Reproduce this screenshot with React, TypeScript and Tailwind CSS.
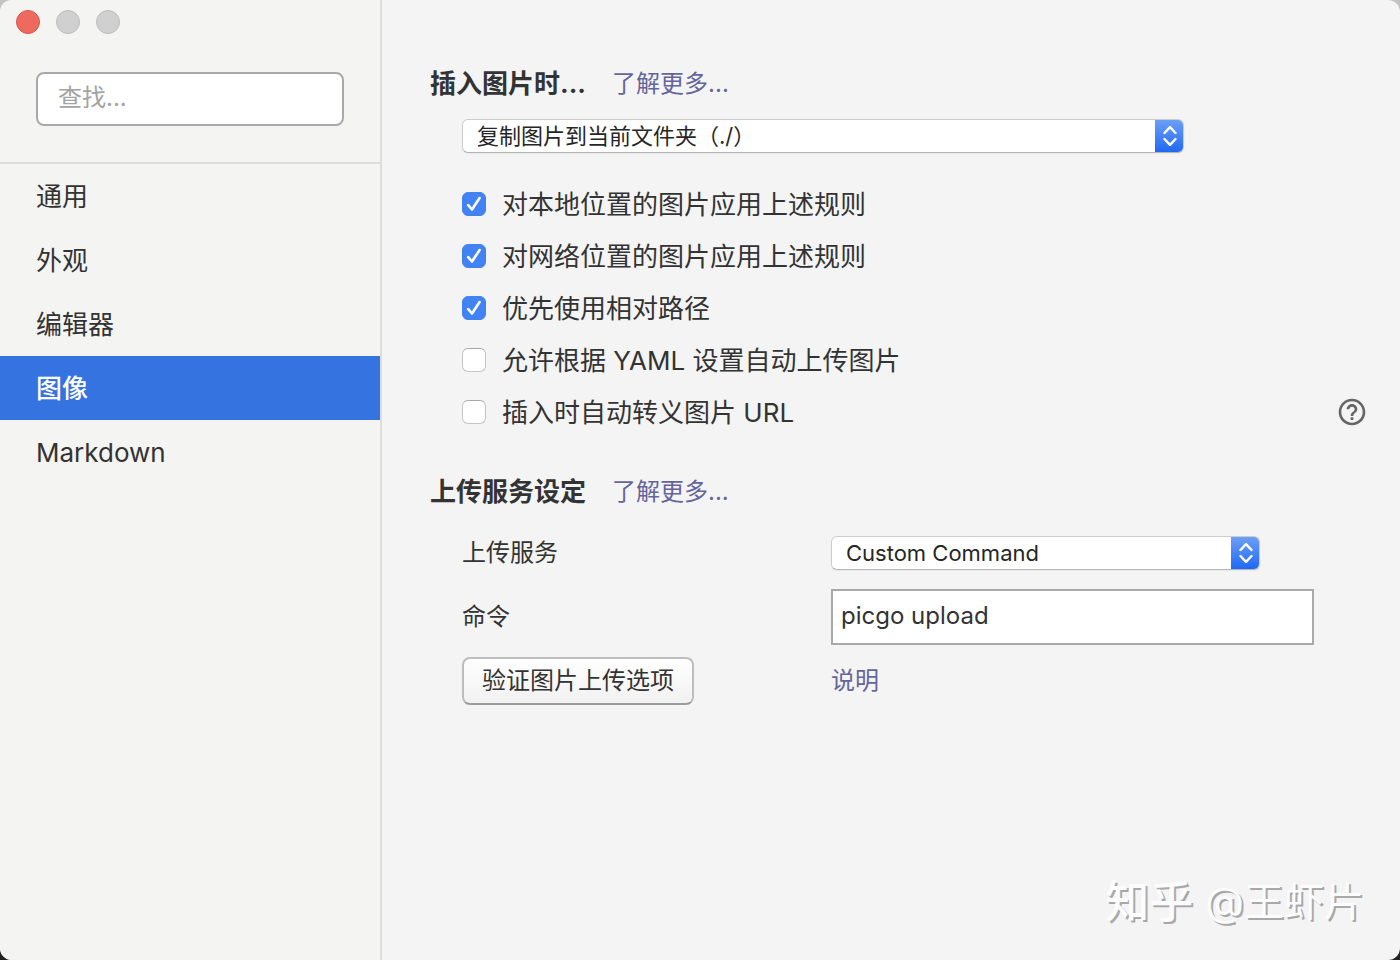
import { useState } from "react";
import type { ReactNode } from "react";
import clsx from "clsx";
import { MdHelpOutline } from "react-icons/md";

const sections = ["通用", "外观", "编辑器", "图像", "Markdown"];

const imageRules = [
  { id: "local", label: "对本地位置的图片应用上述规则", checked: true },
  { id: "network", label: "对网络位置的图片应用上述规则", checked: true },
  { id: "relative", label: "优先使用相对路径", checked: true },
  { id: "yaml", label: "允许根据 YAML 设置自动上传图片", checked: false },
  { id: "escape", label: "插入时自动转义图片 URL", checked: false, help: true },
];

type SelectProps = {
  id: string;
  label?: string;
  options: string[];
  className?: string;
};

const Select = ({ id, label, options, className }: SelectProps) => (
  <div
    className={clsx(
      "relative h-[34px] overflow-hidden rounded-md border border-[#cdcdcd] border-b-[#b4b4b4] bg-white shadow-xs",
      className
    )}
  >
    <select
      id={id}
      aria-label={label}
      className="block h-full w-full appearance-none bg-transparent pr-10 pl-[14px] text-[22px] leading-8 text-[#262626] outline-none"
    >
      {options.map((option) => (
        <option key={option}>{option}</option>
      ))}
    </select>
    {/* Stepper arrows */}
    <span className="pointer-events-none absolute -inset-y-px -right-px flex w-[29px] items-center justify-center bg-linear-to-b from-[#6ea0f5] to-[#1b66f3]">
      <svg
        viewBox="0 0 14 22"
        className="h-[22px] w-[14px]"
        fill="none"
        stroke="white"
        strokeWidth="2.4"
        strokeLinecap="round"
        strokeLinejoin="round"
      >
        <path d="M1.5 8 7 2.2 12.5 8M1.5 14 7 19.8l5.5-5.8" />
      </svg>
    </span>
  </div>
);

type CheckboxProps = {
  label: string;
  checked: boolean;
  onChange: () => void;
};

const Checkbox = ({ label, checked, onChange }: CheckboxProps) => (
  <label className="flex items-center gap-4">
    <span className="relative size-6">
      <input
        type="checkbox"
        checked={checked}
        onChange={onChange}
        className="block size-6 appearance-none rounded-md border border-[#c4c4c4] border-t-[#a8a8a8] bg-white checked:border-[#4283f4] checked:bg-[#4283f4]"
      />
      {checked && (
        <svg
          viewBox="0 0 24 24"
          className="pointer-events-none absolute inset-0 size-6"
          fill="none"
          stroke="white"
          strokeWidth="2.6"
          strokeLinecap="round"
          strokeLinejoin="round"
        >
          <path d="m6.2 13.2 3.8 4.3 7.6-11.5" />
        </svg>
      )}
    </span>
    <span className="pt-0.5">{label}</span>
  </label>
);

const SectionTitle = ({ children }: { children: ReactNode }) => (
  <div className="flex h-10 items-center gap-[26px]">
    <h2 className="text-[26px] leading-10 font-bold">{children}</h2>
    <a href="#more" className="text-2xl leading-10 text-[#65659a]">
      了解更多...
    </a>
  </div>
);

const Sidebar = () => {
  const [active, setActive] = useState("图像");

  return (
    <aside className="w-[382px] shrink-0 border-r-2 border-[#dcdcdc] bg-[#f4f4f2]">
      <div className="flex gap-4 px-4 pt-[10px]">
        <button
          aria-label="关闭"
          className="size-6 rounded-full border border-[#d9574d] bg-[#ee6a5f]"
        />
        <button
          aria-label="最小化"
          className="size-6 rounded-full border border-[#bcbcbc] bg-[#d0d0d0]"
        />
        <button
          aria-label="缩放"
          className="size-6 rounded-full border border-[#bcbcbc] bg-[#d0d0d0]"
        />
      </div>
      <div className="border-b-2 border-[#dcdcdc] px-9 pt-[38px] pb-9">
        <input
          type="text"
          aria-label="查找"
          placeholder="查找..."
          className="block h-[54px] w-full rounded-lg border-2 border-[#a9a9a9] bg-white px-5 pb-1 text-2xl outline-none placeholder:text-[#a3a3a3]"
        />
      </div>
      <nav>
        {sections.map((section) => (
          <button
            key={section}
            onClick={() => setActive(section)}
            className={clsx(
              "block h-16 w-full px-9 pt-0.5 text-left text-[26px] leading-10",
              active === section && "bg-[#3574e0] font-medium text-white"
            )}
          >
            {section}
          </button>
        ))}
      </nav>
    </aside>
  );
};

const App = () => {
  const [rules, setRules] = useState(imageRules);

  const toggle = (id: string) =>
    setRules((prev) =>
      prev.map((r) => (r.id === id ? { ...r, checked: !r.checked } : r))
    );

  return (
    <div className="min-h-screen bg-linear-to-b from-[#c4c4c4] to-[#222222] font-['Inter','Noto_Sans_CJK_SC',sans-serif] text-[#333333]">
      <div className="relative flex min-h-screen overflow-hidden rounded-xl bg-[#f4f4f4]">
        <Sidebar />

        <main className="min-w-0 flex-1 pt-16 pr-8 pl-12">
          <section>
            <SectionTitle>插入图片时...</SectionTitle>
            <div className="pl-8">
              <Select
                id="insert-action"
                label="插入图片时"
                options={["复制图片到当前文件夹（./）", "无特殊操作", "上传图片"]}
                className="mt-[15px] max-w-[722px]"
              />
              <ul className="mt-[25px] text-[26px] leading-10">
                {rules.map((rule) => (
                  <li
                    key={rule.id}
                    className="flex h-[52px] items-center justify-between"
                  >
                    <Checkbox
                      label={rule.label}
                      checked={rule.checked}
                      onChange={() => toggle(rule.id)}
                    />
                    {rule.help && (
                      <button aria-label="帮助" className="text-[#666666]">
                        <MdHelpOutline className="size-8" />
                      </button>
                    )}
                  </li>
                ))}
              </ul>
            </div>
          </section>

          <section className="mt-[34px]">
            <SectionTitle>上传服务设定</SectionTitle>
            <div className="mt-[9px] grid auto-rows-[64px] grid-cols-[369px_1fr] items-center pl-8 text-2xl">
              <label htmlFor="service">上传服务</label>
              <Select
                id="service"
                options={["Custom Command", "PicGo.app", "PicGo-Core"]}
                className="max-w-[429px]"
              />
              <label htmlFor="command">命令</label>
              <input
                id="command"
                type="text"
                defaultValue="picgo upload"
                className="h-14 w-full max-w-[483px] border-2 border-[#a9a9a9] bg-white px-2 pb-1 text-2xl outline-none"
              />
              <div>
                <button className="h-12 rounded-lg border-2 border-[#bdbdbd] border-b-[#9c9c9c] bg-linear-to-b from-white to-[#f1f1f1] px-[18px] text-2xl leading-10">
                  验证图片上传选项
                </button>
              </div>
              <div>
                <a href="#docs" className="text-[#65659a]">
                  说明
                </a>
              </div>
            </div>
          </section>
        </main>

        {/* Watermark */}
        <p className="pointer-events-none absolute right-9 bottom-7 flex items-center gap-3 text-[40px] leading-[60px] text-[#fcfcfc] [text-shadow:2px_2px_0_#a8a8a8]">
          <span className="text-[44px] font-medium">知乎</span>
          <span>@王虾片</span>
        </p>
      </div>
    </div>
  );
};

export default App;
